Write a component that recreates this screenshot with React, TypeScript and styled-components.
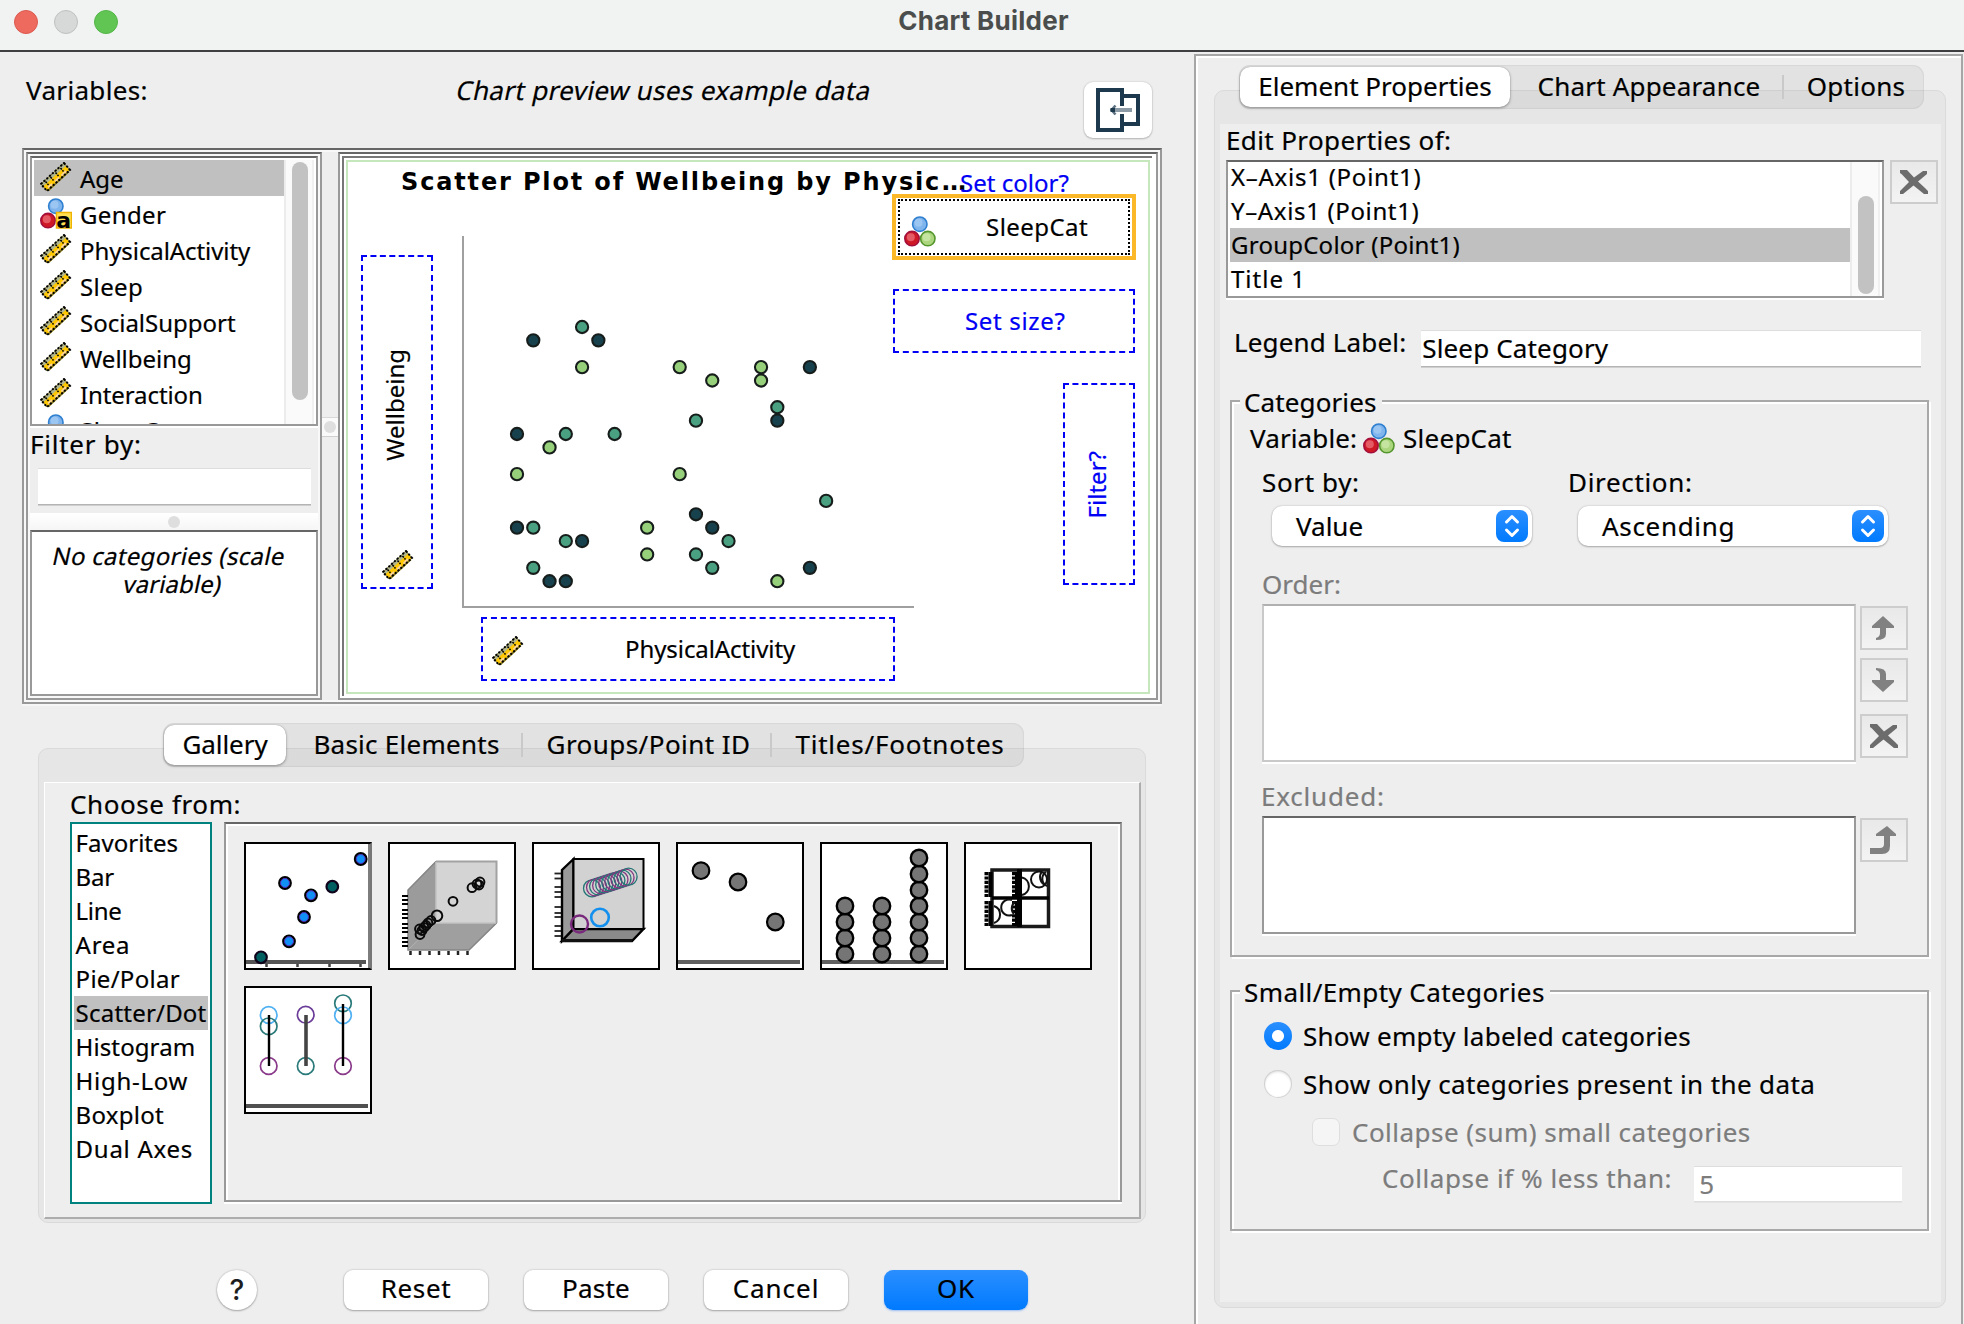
import React from 'react';
import styled, { createGlobalStyle, css } from 'styled-components';

const Global = createGlobalStyle`
  *, *::before, *::after { box-sizing: border-box; }
  body { margin: 0; background: #eeeeee; }
`;

/* ---------- text ---------- */

const Text = styled.span<{ $size?: number; $ls?: number; $ml?: number; $color?: string; $lh?: number }>`
  display: block;
  flex: none;
  font-family: "Noto Sans", "Open Sans", sans-serif;
  font-size: ${(p) => p.$size ?? 26}px;
  line-height: ${(p) => p.$lh ?? 30}px;
  letter-spacing: ${(p) => p.$ls ?? 0.3}px;
  margin-left: ${(p) => p.$ml ?? 0}px;
  color: ${(p) => p.$color ?? '#000'};
  -webkit-text-stroke: 0.2px ${(p) => p.$color ?? '#000'};
  white-space: pre;
`;

const SlantedText = styled(Text)`
  justify-self: start;
  transform: skewX(-12deg);
`;

/* ---------- window ---------- */

const Window = styled.div`
  width: 1964px;
  height: 1324px;
  display: flex;
  flex-direction: column;
  background: #eeeeee;
  overflow: hidden;
`;

const TitleBar = styled.header`
  height: 52px;
  flex: none;
  display: grid;
  grid-template-columns: 200px 1fr 200px;
  background: #f0f3f2;
  border-bottom: 2px solid #3f3f41;
`;

const Lights = styled.div`
  display: flex;
  gap: 16px;
  padding: 10px 0 0 14px;
`;

const Light = styled.i<{ $fill: string; $edge: string }>`
  width: 24px;
  height: 24px;
  border-radius: 50%;
  background: ${(p) => p.$fill};
  border: 1px solid ${(p) => p.$edge};
`;

const WindowTitle = styled.h1`
  margin: 0;
  padding-top: 5px;
  text-align: center;
  font: 700 26px/32px Inter, sans-serif;
  letter-spacing: 0.25px;
  color: #4b4d4d;
  padding-left: 3px;
`;

const Body = styled.div`
  flex: 1;
  display: grid;
  grid-template-columns: 1194px 770px;
  min-height: 0;
`;

const LeftColumn = styled.main`
  display: flex;
  flex-direction: column;
`;

const PreviewHeader = styled.div`
  height: 96px;
  display: grid;
  grid-template-columns: 431px 1fr 68px;
  align-items: start;
  padding: 23px 42px 0 26px;
`;

const CollapseButton = styled.button`
  margin: 7px 0 0;
  padding: 0;
  width: 68px;
  height: 56px;
  border: 0;
  border-radius: 9px;
  background: #fff;
  box-shadow: 0 0 2px rgba(0, 0, 0, 0.2), 0 1px 2px rgba(0, 0, 0, 0.2);
`;

/* ---------- framed boxes ---------- */

const sunken = css`
  border: 2px solid #999;
  border-top-color: #666;
`;

const SplitFrame = styled.section`
  ${sunken}
  margin-left: 22px;
  width: 1140px;
  height: 556px;
  padding: 2px;
  display: flex;
  background: #f8f8f8;
  box-shadow: 0 2px 0 #f6f6f6;
`;

const Pane = styled.div<{ $w: number; $bg?: string }>`
  ${sunken}
  width: ${(p) => p.$w}px;
  padding: 2px;
  display: flex;
  flex-direction: column;
  background: ${(p) => p.$bg ?? '#fff'};
`;

const VerticalDivider = styled.div`
  width: 16px;
  display: flex;
  flex-direction: column;
  background: #eee;
`;

const DividerGrip = styled.div`
  margin-top: 265px;
  height: 20px;
  display: flex;
  align-items: center;
  justify-content: center;
  background: #fafafa;
  border-top: 1px solid #d8d8d8;
  border-bottom: 1px solid #d0d0d0;
`;

const HorizontalDivider = styled.div`
  height: 17px;
  display: flex;
  align-items: center;
  justify-content: center;
  background: linear-gradient(#fff, #f6f6f6);
`;

const Grip = styled.i`
  width: 12px;
  height: 12px;
  border-radius: 50%;
  background: #dedede;
`;

const VariableBox = styled.div`
  ${sunken}
  height: 270px;
  padding: 2px 2px 0;
  display: grid;
  grid-template-columns: 250px 30px;
  overflow: hidden;
  background: #fff;
  box-shadow: 0 2px 0 #fff;
`;

const PlainList = styled.ul`
  margin: 0;
  padding: 0;
  list-style: none;
  overflow: hidden;
`;

const VariableRow = styled.li<{ $selected?: boolean }>`
  height: 36px;
  display: flex;
  align-items: flex-start;
  padding: 2px 0 0 6px;
  background: ${(p) => (p.$selected ? '#c0c0c0' : 'transparent')};
  svg { flex: none; }
`;

const ScrollTrack = styled.div`
  border-left: 2px solid #ececec;
  border-right: 2px solid #f0f0f0;
  background: #fafafa;
  display: flex;
  justify-content: center;
`;

const ScrollThumb = styled.i<{ $top: number; $h: number }>`
  width: 16px;
  height: ${(p) => p.$h}px;
  margin-top: ${(p) => p.$top}px;
  margin-left: 2px;
  border-radius: 8px;
  background: #c2c2c2;
`;

const FilterArea = styled.div`
  height: 87px;
  padding: 3px 8px 0 7px;
  background: #eee;
  box-shadow: inset 0 2px 0 #fff;
`;

const Field = styled.div<{ $w: number; $h: number; $top?: number; $left?: number; $muted?: boolean }>`
  width: ${(p) => p.$w}px;
  height: ${(p) => p.$h}px;
  margin-top: ${(p) => p.$top ?? 0}px;
  margin-left: ${(p) => p.$left ?? 0}px;
  flex: none;
  background: #fff;
  border-top: 1px solid #ddd;
  border-bottom: 1px solid ${(p) => (p.$muted ? '#ddd' : '#b4b4b4')};
  box-shadow: 0 1px 0 ${(p) => (p.$muted ? '#e4e4e4' : '#cfcfcf')};
`;

const CategoryBox = styled.div`
  ${sunken}
  flex: 1;
  padding-top: 10px;
  display: grid;
  align-content: start;
  background: #fff;
`;

/* ---------- chart preview ---------- */

const PreviewEdge = styled.div`
  flex: 1;
  display: flex;
  margin-right: 2px;
  padding: 2px 2px 2px;
  border-top: 2px solid #777;
  border-left: 2px solid #777;
`;

const ChartCanvas = styled.div`
  flex: 1;
  position: relative;
  border: 2px solid #c6e6bb;
  background: #fff;
`;

const Plot = styled.svg`
  position: absolute;
  left: 0;
  top: 0;
`;

const Placed = styled.div<{ $x: number; $y: number }>`
  position: absolute;
  left: ${(p) => p.$x}px;
  top: ${(p) => p.$y}px;
`;

const ChartTitle = styled.h2`
  margin: 0;
  font: 700 24px/30px "DejaVu Sans", sans-serif;
  letter-spacing: 1.85px;
  white-space: pre;
  color: #000;
`;

const Ellipsis = styled.span`
  letter-spacing: -0.9px;
`;

const DropZone = styled(Placed)<{ $w: number; $h: number }>`
  width: ${(p) => p.$w}px;
  height: ${(p) => p.$h}px;
  border: 2px dashed #0000f5;
  display: flex;
`;

const SelectedZone = styled(Placed)`
  width: 244px;
  height: 66px;
  padding: 1px 2px;
  border: 4px solid #fbb829;
  background: #fff;
  display: flex;
`;

const FocusRing = styled.div`
  flex: 1;
  display: flex;
  align-items: flex-start;
  padding: 15px 0 0 4px;
  border: 2px dotted #000;
`;

const VerticalText = styled(Text)`
  writing-mode: vertical-rl;
  transform: rotate(180deg);
`;

/* ---------- tabs ---------- */

const TabBar = styled.nav<{ $ml: number; $w: number; $mt: number }>`
  position: relative;
  z-index: 1;
  flex: none;
  display: flex;
  height: 44px;
  width: ${(p) => p.$w}px;
  margin: ${(p) => p.$mt}px 0 0 ${(p) => p.$ml}px;
  padding: 2px 0 2px 1px;
  border-radius: 11px;
  background: linear-gradient(rgba(0, 0, 0, 0.052), rgba(0, 0, 0, 0.052));
  box-shadow: inset 0 0 1px 1px rgba(0, 0, 0, 0.05);
`;

const Tab = styled.div<{ $w: number; $active?: boolean; $divided?: boolean }>`
  width: ${(p) => p.$w}px;
  display: flex;
  align-items: center;
  justify-content: center;
  padding: 0 0 2px ${(p) => (p.$active ? 0 : 6)}px;
  border-radius: ${(p) => (p.$active ? 10 : 0)}px;
  background: ${(p) => (p.$active ? '#fff' : 'none')};
  box-shadow: ${(p) => (p.$active ? '0 1px 3px rgba(0,0,0,.35), 0 0 1px rgba(0,0,0,.3)' : 'none')};
  ${(p) =>
    p.$divided &&
    css`
      background: linear-gradient(#c9c9c9, #c9c9c9) left center / 2px 24px no-repeat;
    `}
`;

const TabPanel = styled.div<{ $ml: number; $w: number; $h: number; $pad: string }>`
  flex: none;
  width: ${(p) => p.$w}px;
  height: ${(p) => p.$h}px;
  margin: -19px 0 0 ${(p) => p.$ml}px;
  padding: ${(p) => p.$pad};
  border: 1px solid #dadada;
  border-radius: 10px;
  background: #e6e6e6;
`;

const GalleryInner = styled.div`
  width: 1097px;
  height: 437px;
  padding: 6px 0 0 25px;
  background: #eee;
  border: solid;
  border-width: 1px 2px 2px 1px;
  border-color: #fff #adadad #adadad #fff;
`;

const GalleryRow = styled.div`
  display: flex;
  gap: 12px;
  margin-top: 3px;
`;

const TypeList = styled(PlainList)`
  width: 142px;
  height: 382px;
  padding: 2px;
  border: 2px solid #00827f;
  background: #fff;
`;

const TypeRow = styled.li<{ $selected?: boolean }>`
  height: 34px;
  padding-left: 1px;
  background: ${(p) => (p.$selected ? '#c0c0c0' : 'transparent')};
`;

const ThumbBox = styled.div`
  ${sunken}
  width: 898px;
  height: 380px;
  padding: 18px;
  display: flex;
  flex-wrap: wrap;
  align-content: flex-start;
  gap: 16px;
  box-shadow: 0 2px 0 #fff, inset 2px 2px 0 #fff, inset -2px 0 0 #fff;
`;

const Thumb = styled.div<{ $shade?: boolean }>`
  width: 128px;
  height: 128px;
  border: 2px solid #000;
  border-right-color: ${(p) => (p.$shade ? '#777' : '#000')};
  background: #fff;
  svg { display: block; }
`;

/* ---------- buttons ---------- */

const ButtonRow = styled.footer`
  display: flex;
  align-items: center;
  height: 40px;
  margin: 47px 0 0 217px;
`;

const HelpButton = styled.button`
  width: 40px;
  height: 40px;
  margin: 0 87px 0 0;
  padding: 0 0 1px;
  border: 0;
  border-radius: 50%;
  background: #fff;
  box-shadow: 0 0 2px rgba(0, 0, 0, 0.25), 0 1px 2px rgba(0, 0, 0, 0.25);
  font: 500 28px/36px Inter, sans-serif;
  color: #1d1d1d;
`;

const PushButton = styled.button<{ $primary?: boolean }>`
  width: 144px;
  height: 40px;
  margin: 0 36px 0 0;
  padding: 0 0 4px;
  border: 0;
  border-radius: 9px;
  display: flex;
  align-items: center;
  justify-content: center;
  background: ${(p) => (p.$primary ? 'linear-gradient(#2b8fff, #007aff)' : '#fff')};
  box-shadow: ${(p) =>
    p.$primary ? '0 1px 2px rgba(0,100,255,.35)' : '0 0 2px rgba(0,0,0,.25), 0 1px 2px rgba(0,0,0,.25)'};
`;

const ToolButton = styled.button<{ $mt?: number }>`
  display: block;
  flex: none;
  width: 48px;
  height: 44px;
  margin: ${(p) => p.$mt ?? 0}px 0 0;
  padding: 0;
  border: 2px solid #cdcdcd;
  background: linear-gradient(#e9e9e9, #f3f3f3);
  svg { display: block; margin: -2px; }
`;

/* ---------- properties column ---------- */

const Sidebar = styled.aside`
  margin-top: 2px;
  width: 769px;
  border: 2px solid #a6a6a6;
  border-bottom: 0;
  box-shadow: inset 2px 2px 0 #fff;
  display: flex;
  flex-direction: column;
`;

const PropsInner = styled.div`
  width: 721px;
  height: 1178px;
  padding: 1px 0 0 6px;
  display: flex;
  flex-direction: column;
  background: #eee;
`;

const ElementRow = styled.div`
  display: flex;
  gap: 6px;
  margin-top: 5px;
`;

const ElementBox = styled.div`
  ${sunken}
  width: 658px;
  height: 138px;
  padding: 0 2px;
  display: grid;
  grid-template-columns: 620px 30px;
  overflow: hidden;
  background: #fff;
  box-shadow: 0 2px 0 #fff;
`;

const ElementItems = styled(PlainList)`
  display: flex;
  flex-direction: column;
  justify-content: flex-end;
`;

const ElementItem = styled.li<{ $selected?: boolean }>`
  flex: none;
  height: 34px;
  padding-left: 1px;
  background: ${(p) => (p.$selected ? '#c0c0c0' : 'transparent')};
`;

const LegendRow = styled.div`
  display: flex;
  align-items: flex-start;
  height: 40px;
  margin: 29px 0 33px 8px;
`;

const GroupBox = styled.section<{ $h: number; $mb?: number }>`
  width: 699px;
  height: ${(p) => p.$h}px;
  margin: 0 0 ${(p) => p.$mb ?? 0}px 4px;
  flex: none;
  border: 2px solid #a8a8a8;
  box-shadow: 2px 2px 0 #fff, inset 2px 2px 0 #fff;
`;

const GroupTitle = styled.div<{ $w: number; $mt: number }>`
  width: ${(p) => p.$w}px;
  height: 30px;
  margin: ${(p) => p.$mt}px 0 0 8px;
  padding-left: 4px;
  background: #eee;
`;

const Line = styled.div<{ $mt: number; $ml: number }>`
  display: flex;
  align-items: flex-start;
  height: 30px;
  margin: ${(p) => p.$mt}px 0 0 ${(p) => p.$ml}px;
`;

const SortGrid = styled.div`
  display: grid;
  grid-template-columns: 306px 320px;
  margin: 14px 0 0 30px;
  row-gap: 9px;
`;

const Select = styled.div<{ $w: number; $ml: number }>`
  width: ${(p) => p.$w}px;
  height: 40px;
  margin-left: ${(p) => p.$ml}px;
  padding: 0 4px 0 25px;
  display: flex;
  align-items: center;
  justify-content: space-between;
  border-radius: 10px;
  background: #fff;
  box-shadow: 0 0 2px rgba(0, 0, 0, 0.22), 0 1px 2px rgba(0, 0, 0, 0.25);
`;

const Stepper = styled.i`
  width: 32px;
  height: 32px;
  border-radius: 8px;
  background: linear-gradient(#2b8fff, #007aff);
  svg { display: block; }
`;

const ListWell = styled.div<{ $h: number; $soft?: boolean }>`
  width: 594px;
  height: ${(p) => p.$h}px;
  border: 2px solid ${(p) => (p.$soft ? '#c9c9c9' : '#999')};
  border-top-color: ${(p) => (p.$soft ? '#b0b0b0' : '#666')};
  background: #fff;
  box-shadow: 0 2px 0 #fff;
`;

const WellRow = styled.div<{ $mt: number }>`
  display: flex;
  gap: 4px;
  margin: ${(p) => p.$mt}px 0 0 30px;
`;

const Radio = styled.i<{ $on?: boolean }>`
  width: 28px;
  height: 28px;
  margin-top: 1px;
  border-radius: 50%;
  flex: none;
  background: ${(p) =>
    p.$on ? 'radial-gradient(circle, #fff 0 5.5px, transparent 6.5px), linear-gradient(#2b8fff, #007aff)' : '#fff'};
  box-shadow: ${(p) => (p.$on ? 'none' : 'inset 0 0 1px 1px #cfcfcf, inset 0 2px 3px rgba(0,0,0,.12)')};
`;

const Checkbox = styled.i`
  width: 28px;
  height: 28px;
  margin-top: 1px;
  border-radius: 7px;
  flex: none;
  background: #f5f5f5;
  border: 1px solid #dedede;
`;

/* ---------- drawings ---------- */

const RulerIcon = () => (
  <svg width="32" height="32" viewBox="0 0 32 32">
    <path d="M24 1 30 8 7 29 1 22Z" fill="#ffc800" />
    <path d="M24 1 26.200 3.600 3.200 24.600 1 22Z" fill="#b3b78e" />
    <path d="M26 9 21.500 13.500M19 15.500 15 19.500M12 22 8 25.500" stroke="#f9d3a0" strokeWidth="1.8" />
    <path d="M29 9.500 8.500 28.500" stroke="#8f7f10" strokeWidth="1.6" />
    <path d="M24 1 30 8 7 29 1 22Z" fill="none" stroke="#6a673a" strokeWidth="1" />
    <path d="M24 1 30 8 7 29 1 22Z" fill="none" stroke="#000" strokeWidth="2" strokeDasharray="2 1.8" />
    <path d="M20.500 6 23.500 9.500M15.500 10.500 18.500 14M10.500 15 13.500 18.500M5.500 19.500 8.500 23" stroke="#000" strokeWidth="1.5" strokeDasharray="2 1" />
  </svg>
);

const Sphere = ({ x, y, light, mid, edge }: { x: number; y: number; light: string; mid: string; edge: string }) => (
  <g>
    <circle cx={x} cy={y} r="7.2" fill={mid} stroke={edge} strokeWidth="1.6" />
    <circle cx={x - 1.2} cy={y - 1.4} r="4" fill={light} opacity="0.7" />
  </g>
);

const NominalIcon = ({ letter }: { letter?: boolean }) => (
  <svg width="32" height="32" viewBox="0 0 32 32">
    <Sphere x={15.8} y={8.2} light="#a6cdf5" mid="#7fb4ec" edge="#2f7fd0" />
    <Sphere x={8} y={22.6} light="#ee7780" mid="#cf1826" edge="#a30f3c" />
    {letter ? (
      <g>
        <rect x="16.500" y="14.500" width="15" height="15.500" fill="#ffe052" stroke="#f0b400" strokeWidth="1.5" />
        <text x="23.800" y="29.500" textAnchor="middle" fontFamily="DejaVu Sans, sans-serif" fontWeight="700" fontSize="22" fill="#000">a</text>
      </g>
    ) : (
      <Sphere x={23.8} y={22.6} light="#cfeaae" mid="#abd67e" edge="#55952e" />
    )}
  </svg>
);

const CollapseIcon = () => (
  <svg width="68" height="56" viewBox="0 0 68 56" fill="none" stroke="#1d394e" strokeWidth="4">
    <path d="M38 24V8H14V48H38V32" />
    <path d="M36 14H54V42H36" />
    <path d="M31 28H48" stroke="#8d9ba6" />
    <path d="M31.500 23.500 27.500 28 31.500 32.500" stroke="#5d7181" strokeWidth="2.500" />
    <path d="M26.500 28H31" strokeWidth="4" />
  </svg>
);

const CrossIcon = () => (
  <svg width="48" height="44" viewBox="0 0 48 44">
    <path d="M10 10H17L24 17.500 33 11H37V14L28 21.500 35 28 38 31V34H34L23.500 25.500 13 34H10V31L19 22 12 14.500 10 13Z" fill="#6c6c6c" />
  </svg>
);

const ArrowUpIcon = () => (
  <svg width="48" height="44" viewBox="0 0 48 44">
    <path d="M23 10 34 20V22H26V28Q26 34 16 34V32Q20 31 20 27V22H12V20Z" fill="#818181" />
  </svg>
);

const ArrowDownIcon = () => (
  <svg width="48" height="44" viewBox="0 0 48 44">
    <path d="M23 34 34 24V22H26V16Q26 10 16 10V12Q20 13 20 17V22H12V24Z" fill="#818181" />
  </svg>
);

const ReturnIcon = () => (
  <svg width="48" height="44" viewBox="0 0 48 44">
    <path d="M27 8 36 16V18H30V28Q30 36 22 36H10V30H20Q24 30 24 26V18H16V16Z" fill="#818181" />
  </svg>
);

const StepperArrows = () => (
  <svg width="32" height="32" viewBox="0 0 32 32" fill="none" stroke="#fff" strokeWidth="3" strokeLinecap="round" strokeLinejoin="round">
    <path d="M10.500 12 16 6.500 21.500 12M10.500 20 16 25.500 21.500 20" />
  </svg>
);

/* ---------- scatter data ---------- */

const COLORS = { d: '#18414e', t: '#4aa182', g: '#97d07a' };
type Pt = [number, number, keyof typeof COLORS];

const points: Pt[] = [
  [4, 19, 't'], [1, 18, 'd'], [5, 18, 'd'], [4, 16, 'g'], [10, 16, 'g'], [15, 16, 'g'], [18, 16, 'd'],
  [12, 15, 'g'], [15, 15, 'g'], [16, 13, 't'], [16, 12, 'd'], [11, 12, 't'], [0, 11, 'd'], [3, 11, 't'],
  [6, 11, 't'], [2, 10, 'g'], [0, 8, 'g'], [10, 8, 'g'], [19, 6, 't'], [11, 5, 'd'], [0, 4, 'd'], [1, 4, 't'],
  [8, 4, 'g'], [12, 4, 'd'], [3, 3, 't'], [4, 3, 'd'], [13, 3, 't'], [8, 2, 'g'], [11, 2, 't'], [1, 1, 't'],
  [12, 1, 't'], [18, 1, 'd'], [2, 0, 'd'], [3, 0, 'd'], [16, 0, 'g'],
];

const ScatterPlot = () => (
  <Plot width="800" height="530" viewBox="0 0 800 530">
    <path d="M115 74V445H566" fill="none" stroke="#a0a0a0" strokeWidth="2" />
    {points.map(([k, j, c], i) => (
      <circle key={i} cx={169 + 16.27 * k} cy={419.2 - 13.38 * j} r="6.100" fill={COLORS[c]} stroke="#161d1b" strokeWidth="2.1" />
    ))}
  </Plot>
);

/* ---------- gallery thumbnails ---------- */

const Svg = ({ children }: { children: React.ReactNode }) => (
  <svg width="124" height="124" viewBox="0 0 124 124" fill="none">{children}</svg>
);

const SimpleScatter = () => (
  <Svg>
    <path d="M0 118H120" stroke="#555" strokeWidth="4" />
    <path d="M20.500 120V123M51.500 120V123M83.500 120V123M114.500 120V123" stroke="#444" strokeWidth="2.500" />
    <path d="M123 0V124" stroke="#7d7d7d" strokeWidth="2" />
    {[[114.7, 15], [39, 39], [65, 51.3], [58, 73], [43, 97.3]].map(([x, y]) => (
      <g key={x}>
        <circle cx={x} cy={y} r="5.800" fill="#1090f5" stroke="#000" strokeWidth="2.200" />
        <circle cx={x} cy={y} r="4.500" stroke="#5b22b8" strokeWidth="0.900" />
      </g>
    ))}
    {[[86.3, 42.7], [15, 113.3]].map(([x, y]) => (
      <circle key={x} cx={x} cy={y} r="5.800" fill="#005f61" stroke="#10041c" strokeWidth="2.200" />
    ))}
  </Svg>
);

const Scatter3D = () => (
  <Svg>
    <path d="M46 17V79L18 106V46Z" fill="#9b9b9b" />
    <path d="M46 79H107L79 106H18Z" fill="#9f9f9f" />
    <path d="M46 17.500 18 46V106H79L106.500 79" stroke="#858585" strokeWidth="1.500" />
    <path d="M46 17.500H106.500V79H46Z" fill="#d4d4d4" />
    <path d="M46 17.500H106.500V79" stroke="#a2a2a2" strokeWidth="2" />
    <path d="M46 18V79H106" stroke="#c2c2c2" strokeWidth="1.500" />
    {[52, 56, 60, 66, 70, 74, 80, 84, 88, 94, 98, 102].map((y) => (
      <path key={y} d={`M12 ${y}H18`} stroke="#000" strokeWidth="2" />
    ))}
    {[20.5, 30, 39.5, 49, 58.5, 68, 77.5].map((x) => (
      <path key={x} d={`M${x} 107V111`} stroke="#222" strokeWidth="2.500" />
    ))}
    {[[89, 41], [90, 38], [87, 40], [82, 43.7], [63, 57.3], [47, 71.7], [41, 76.5], [38, 79], [36, 81.5], [34, 83.5], [32, 86.5], [30, 90.5], [29.500, 85]].map(([x, y], i) => (
      <circle key={i} cx={x} cy={y} r={i === 5 ? 5.3 : 4.4} stroke="#0a0a0a" strokeWidth="2" />
    ))}
  </Svg>
);

const GroupedScatter3D = () => (
  <Svg>
    <path d="M39.500 15 28 26V97L39.500 85Z" fill="#9a9a9a" stroke="#000" strokeWidth="2.400" />
    <path d="M28 97H98L109.500 85H39.500Z" fill="#8a8a8a" stroke="#000" strokeWidth="2.400" />
    <path d="M39.500 15H109.500V85H39.500Z" fill="#d2d2d2" stroke="#000" strokeWidth="2" />
    <path d="M28 96.500H98" stroke="#111" strokeWidth="3" />
    {[29.5, 34.5, 43, 48, 53, 63, 69, 73, 82, 87, 92].map((y) => (
      <path key={y} d={`M20.500 ${y}H27`} stroke="#222" strokeWidth="1.800" />
    ))}
    {Array.from({ length: 13 }, (_, i) => (
      <circle key={i} cx={58 + i * 3.05} cy={44.3 - i * 0.97} r="8.500" stroke={i % 2 ? '#83357f' : '#247575'} strokeWidth="1.300" />
    ))}
    <circle cx="45.500" cy="80" r="8.500" stroke="#7a2a7c" strokeWidth="2.400" />
    <circle cx="66" cy="73.500" r="8.800" stroke="#1390ee" strokeWidth="2.600" />
  </Svg>
);

const SummaryPoint = () => (
  <Svg>
    <path d="M0 118H122" stroke="#606060" strokeWidth="4" />
    {[[23, 26.7], [60, 38], [97.3, 78]].map(([x, y]) => (
      <circle key={x} cx={x} cy={y} r="8.300" fill="#757575" stroke="#000" strokeWidth="2.200" />
    ))}
  </Svg>
);

const DotPlot = () => (
  <Svg>
    <path d="M0 118H122" stroke="#606060" strokeWidth="4" />
    {[[23, 4], [60, 4], [97, 7]].map(([x, n]) =>
      Array.from({ length: n }, (_, i) => (
        <circle key={`${x}-${i}`} cx={x} cy={110 - i * 16} r="8.200" fill="#757575" stroke="#000" strokeWidth="2.400" />
      )),
    )}
  </Svg>
);

const ScatterMatrix = () => (
  <Svg>
    <path d="M26 26H82.500V82.500H26Z" stroke="#1a1a1a" strokeWidth="3.500" />
    <path d="M26 54H83" stroke="#000" strokeWidth="3.600" />
    <path d="M53.500 25V83" stroke="#000" strokeWidth="5" />
    <path d="M24.500 28V53M24.500 57V82M51 28V53M51 57V82" stroke="#000" strokeWidth="4" />
    <path d="M20.500 28V53M20.500 57V82M48 28V53M48 57V82" stroke="#000" strokeWidth="4" strokeDasharray="3.2 1.200" />
    <path d="M56 33.500A9 9 0 0 1 56 51M28 62A9 9 0 0 1 28 79" stroke="#111" strokeWidth="2" />
    <circle cx="73" cy="35.500" r="8" stroke="#111" strokeWidth="2" />
    <path d="M80 28A8 8 0 0 0 81 42M75.500 28A9 9 0 0 0 79 41" stroke="#111" strokeWidth="2" />
    <path d="M46 56A8 8 0 1 0 46 71M49 58A8 8 0 0 0 48 70" stroke="#111" strokeWidth="2" />
  </Svg>
);

const DropLine = () => (
  <Svg>
    <path d="M0 118H122" stroke="#505050" strokeWidth="4" />
    {[[22.7, 27, '#4fb0f2'], [22.7, 38.3, '#2a7a7a'], [22.7, 78, '#8a3a8a'], [59.7, 26.7, '#6a3c98'], [59.7, 78, '#2a7a7a'], [97, 15.3, '#2a7a7a'], [97, 27.3, '#4fb0f2'], [97, 78, '#8a3a8a']].map(([x, y, c], i) => (
      <circle key={i} cx={x} cy={y} r="8.300" stroke={c as string} strokeWidth="1.700" />
    ))}
    <path d="M23 27V78M97 16V78" stroke="#000" strokeWidth="2.400" />
    <path d="M60 27V78" stroke="#444" strokeWidth="3.600" />
  </Svg>
);

/* ---------- content ---------- */

const variables: { name: string; ls: number; ml: number; nominal?: boolean; letter?: boolean }[] = [
  { name: 'Age', ls: 0, ml: 8 },
  { name: 'Gender', ls: 0.37, ml: 8, nominal: true, letter: true },
  { name: 'PhysicalActivity', ls: -0.08, ml: 8 },
  { name: 'Sleep', ls: 0.39, ml: 8 },
  { name: 'SocialSupport', ls: 0, ml: 8 },
  { name: 'Wellbeing', ls: 0, ml: 8 },
  { name: 'Interaction', ls: -0.1, ml: 8 },
  { name: 'SleepCat', ls: 0.45, ml: 8, nominal: true },
];

const chartTypes: [string, number][] = [
  ['Favorites', 0], ['Bar', -0.2], ['Line', -0.3], ['Area', 0.73], ['Pie/Polar', 0.27],
  ['Scatter/Dot', 0.21], ['Histogram', 0.1], ['High-Low', 0.73], ['Boxplot', 0.28], ['Dual Axes', 0.73],
];

const elements: [string, number][] = [
  ['X–Axis1 (Point1)', 0.74], ['Y–Axis1 (Point1)', 0.64], ['GroupColor (Point1)', 0.24], ['Title 1', 1],
];

const GRAY = '#7c7c7c';
const BLUE = '#0000f5';

export default function App() {
  return (
    <Window>
      <Global />
      <TitleBar>
        <Lights>
          <Light $fill="#ee6a5f" $edge="#dc5a50" />
          <Light $fill="#d6d9d8" $edge="#bfc1c1" />
          <Light $fill="#61c554" $edge="#54b548" />
        </Lights>
        <WindowTitle>Chart Builder</WindowTitle>
      </TitleBar>
      <Body>
        <LeftColumn>
          <PreviewHeader>
            <Text $ls={0.33}>Variables:</Text>
            <SlantedText $ls={0.35}>Chart preview uses example data</SlantedText>
            <CollapseButton><CollapseIcon /></CollapseButton>
          </PreviewHeader>

          <SplitFrame>
            <Pane $w={296} $bg="#f8f8f8">
              <VariableBox>
                <PlainList>
                  {variables.map((v, i) => (
                    <VariableRow key={v.name} $selected={i === 0}>
                      {v.nominal ? <NominalIcon letter={v.letter} /> : <RulerIcon />}
                      <Text $size={24} $lh={34} $ls={v.ls} $ml={v.ml}>{v.name}</Text>
                    </VariableRow>
                  ))}
                </PlainList>
                <ScrollTrack><ScrollThumb $top={2} $h={238} /></ScrollTrack>
              </VariableBox>
              <FilterArea>
                <Text $ls={0.76} $ml={-7}>Filter by:</Text>
                <Field $w={273} $h={37} $top={9} $left={1} />
              </FilterArea>
              <HorizontalDivider><Grip /></HorizontalDivider>
              <CategoryBox>
                <SlantedText $size={24} $lh={28} $ls={0.3} $ml={21}>No categories (scale</SlantedText>
                <SlantedText $size={24} $lh={28} $ls={0.1} $ml={92}>variable)</SlantedText>
              </CategoryBox>
            </Pane>

            <VerticalDivider><DividerGrip><Grip /></DividerGrip></VerticalDivider>

            <Pane $w={820}>
              <PreviewEdge>
                <ChartCanvas>
                  <ScatterPlot />
                  <Placed $x={53} $y={5}>
                    <ChartTitle>Scatter Plot of Wellbeing by Physic<Ellipsis>...</Ellipsis></ChartTitle>
                  </Placed>
                  <Placed $x={612} $y={6}><Text $size={24} $ls={0.02} $color={BLUE}>Set color?</Text></Placed>
                  <SelectedZone $x={544} $y={32}>
                    <FocusRing>
                      <NominalIcon />
                      <Text $size={24} $ls={0.45} $ml={50} $lh={22}>SleepCat</Text>
                    </FocusRing>
                  </SelectedZone>
                  <DropZone $x={545} $y={127} $w={242} $h={64}>
                    <Text $size={24} $ls={0.67} $ml={70} $lh={59} $color={BLUE}>Set size?</Text>
                  </DropZone>
                  <DropZone $x={715} $y={221} $w={72} $h={202} />
                  <Placed $x={734} $y={289}><VerticalText $size={24} $color={BLUE} $ls={0.01}>Filter?</VerticalText></Placed>
                  <DropZone $x={13} $y={93} $w={72} $h={334} />
                  <Placed $x={32} $y={187}><VerticalText $size={24} $ls={0}>Wellbeing</VerticalText></Placed>
                  <Placed $x={34} $y={388}><RulerIcon /></Placed>
                  <DropZone $x={133} $y={455} $w={414} $h={64}>
                    <Text $size={24} $ls={-0.08} $lh={59} $ml={142}>PhysicalActivity</Text>
                  </DropZone>
                  <Placed $x={144} $y={474}><RulerIcon /></Placed>
                </ChartCanvas>
              </PreviewEdge>
            </Pane>
          </SplitFrame>

          <TabBar $ml={163} $w={861} $mt={19}>
            <Tab $w={122} $active><Text $ls={-0.06}>Gallery</Text></Tab>
            <Tab $w={235}><Text $ls={0.26}>Basic Elements</Text></Tab>
            <Tab $w={249} $divided><Text $ls={0.45}>Groups/Point ID</Text></Tab>
            <Tab $w={254} $divided><Text $ls={0.78}>Titles/Footnotes</Text></Tab>
          </TabBar>
          <TabPanel $ml={38} $w={1108} $h={475} $pad="33px 0 0 5px">
            <GalleryInner>
              <Text $ls={0.59}>Choose from:</Text>
              <GalleryRow>
                <TypeList>
                  {chartTypes.map(([name, ls]) => (
                    <TypeRow key={name} $selected={name === 'Scatter/Dot'}>
                      <Text $size={24} $lh={34} $ls={ls} $ml={0.6}>{name}</Text>
                    </TypeRow>
                  ))}
                </TypeList>
                <ThumbBox>
                  <Thumb $shade><SimpleScatter /></Thumb>
                  <Thumb><Scatter3D /></Thumb>
                  <Thumb><GroupedScatter3D /></Thumb>
                  <Thumb><SummaryPoint /></Thumb>
                  <Thumb><DotPlot /></Thumb>
                  <Thumb><ScatterMatrix /></Thumb>
                  <Thumb><DropLine /></Thumb>
                </ThumbBox>
              </GalleryRow>
            </GalleryInner>
          </TabPanel>

          <ButtonRow>
            <HelpButton>?</HelpButton>
            <PushButton><Text $ls={0.64}>Reset</Text></PushButton>
            <PushButton><Text $ls={0.21}>Paste</Text></PushButton>
            <PushButton><Text $ls={0.95}>Cancel</Text></PushButton>
            <PushButton $primary><Text $ls={0.69}>OK</Text></PushButton>
          </ButtonRow>
        </LeftColumn>

        <Sidebar>
          <TabBar $ml={43} $w={685} $mt={9}>
            <Tab $w={270} $active><Text $ls={0.01}>Element Properties</Text></Tab>
            <Tab $w={272}><Text $ls={0.19}>Chart Appearance</Text></Tab>
            <Tab $w={142} $divided><Text $ls={0.3}>Options</Text></Tab>
          </TabBar>
          <TabPanel $ml={18} $w={732} $h={1218} $pad="33px 0 0 5px">
            <PropsInner>
              <Text $ls={0.39}>Edit Properties of:</Text>
              <ElementRow>
                <ElementBox>
                  <ElementItems>
                    {elements.map(([name, ls], i) => (
                      <ElementItem key={name} $selected={i === 2}>
                        <Text $size={24} $lh={34} $ls={ls}>{name}</Text>
                      </ElementItem>
                    ))}
                  </ElementItems>
                  <ScrollTrack><ScrollThumb $top={34} $h={98} /></ScrollTrack>
                </ElementBox>
                <ToolButton><CrossIcon /></ToolButton>
              </ElementRow>

              <LegendRow>
                <Text $ls={0.15}>Legend Label:</Text>
                <Field $w={500} $h={37} $top={3} $left={15}><Text $lh={35} $ls={0.15} $ml={1}>Sleep Category</Text></Field>
              </LegendRow>

              <GroupBox $h={557} $mb={33}>
                <GroupTitle $w={142} $mt={-15}><Text $ls={0.12}>Categories</Text></GroupTitle>
                <Line $mt={6} $ml={18}>
                  <Text $ls={0.12}>Variable:</Text>
                  <Line $mt={0} $ml={6}><NominalIcon /></Line>
                  <Text $ls={0.24} $ml={8}>SleepCat</Text>
                </Line>
                <SortGrid>
                  <Text $ls={0.63}>Sort by:</Text>
                  <Text $ls={0.67}>Direction:</Text>
                  <Select $w={260} $ml={10}>
                    <Text $ls={0} $ml={-1}>Value</Text>
                    <Stepper><StepperArrows /></Stepper>
                  </Select>
                  <Select $w={310} $ml={10}>
                    <Text $ls={0.68} $ml={-1}>Ascending</Text>
                    <Stepper><StepperArrows /></Stepper>
                  </Select>
                </SortGrid>
                <Line $mt={23} $ml={30}><Text $ls={0} $color={GRAY}>Order:</Text></Line>
                <WellRow $mt={5}>
                  <ListWell $h={158} $soft />
                  <div>
                    <ToolButton $mt={2}><ArrowUpIcon /></ToolButton>
                    <ToolButton $mt={8}><ArrowDownIcon /></ToolButton>
                    <ToolButton $mt={12}><CrossIcon /></ToolButton>
                  </div>
                </WellRow>
                <Line $mt={19} $ml={29}><Text $ls={0.8} $color={GRAY}>Excluded:</Text></Line>
                <WellRow $mt={5}>
                  <ListWell $h={118} />
                  <ToolButton $mt={2}><ReturnIcon /></ToolButton>
                </WellRow>
              </GroupBox>

              <GroupBox $h={241}>
                <GroupTitle $w={310} $mt={-15}><Text $ls={0.41}>Small/Empty Categories</Text></GroupTitle>
                <Line $mt={14} $ml={32}>
                  <Radio $on />
                  <Text $ls={0.25} $ml={11}>Show empty labeled categories</Text>
                </Line>
                <Line $mt={18} $ml={32}>
                  <Radio />
                  <Text $ls={0.39} $ml={11}>Show only categories present in the data</Text>
                </Line>
                <Line $mt={18} $ml={80}>
                  <Checkbox />
                  <Text $ls={0.47} $ml={12} $color={GRAY}>Collapse (sum) small categories</Text>
                </Line>
                <Line $mt={16} $ml={150}>
                  <Text $ls={0.55} $color={GRAY}>Collapse if % less than:</Text>
                  <Field $w={208} $h={36} $top={3} $left={22} $muted><Text $lh={34} $ml={5} $color={GRAY}>5</Text></Field>
                </Line>
              </GroupBox>
            </PropsInner>
          </TabPanel>
        </Sidebar>
      </Body>
    </Window>
  );
}
